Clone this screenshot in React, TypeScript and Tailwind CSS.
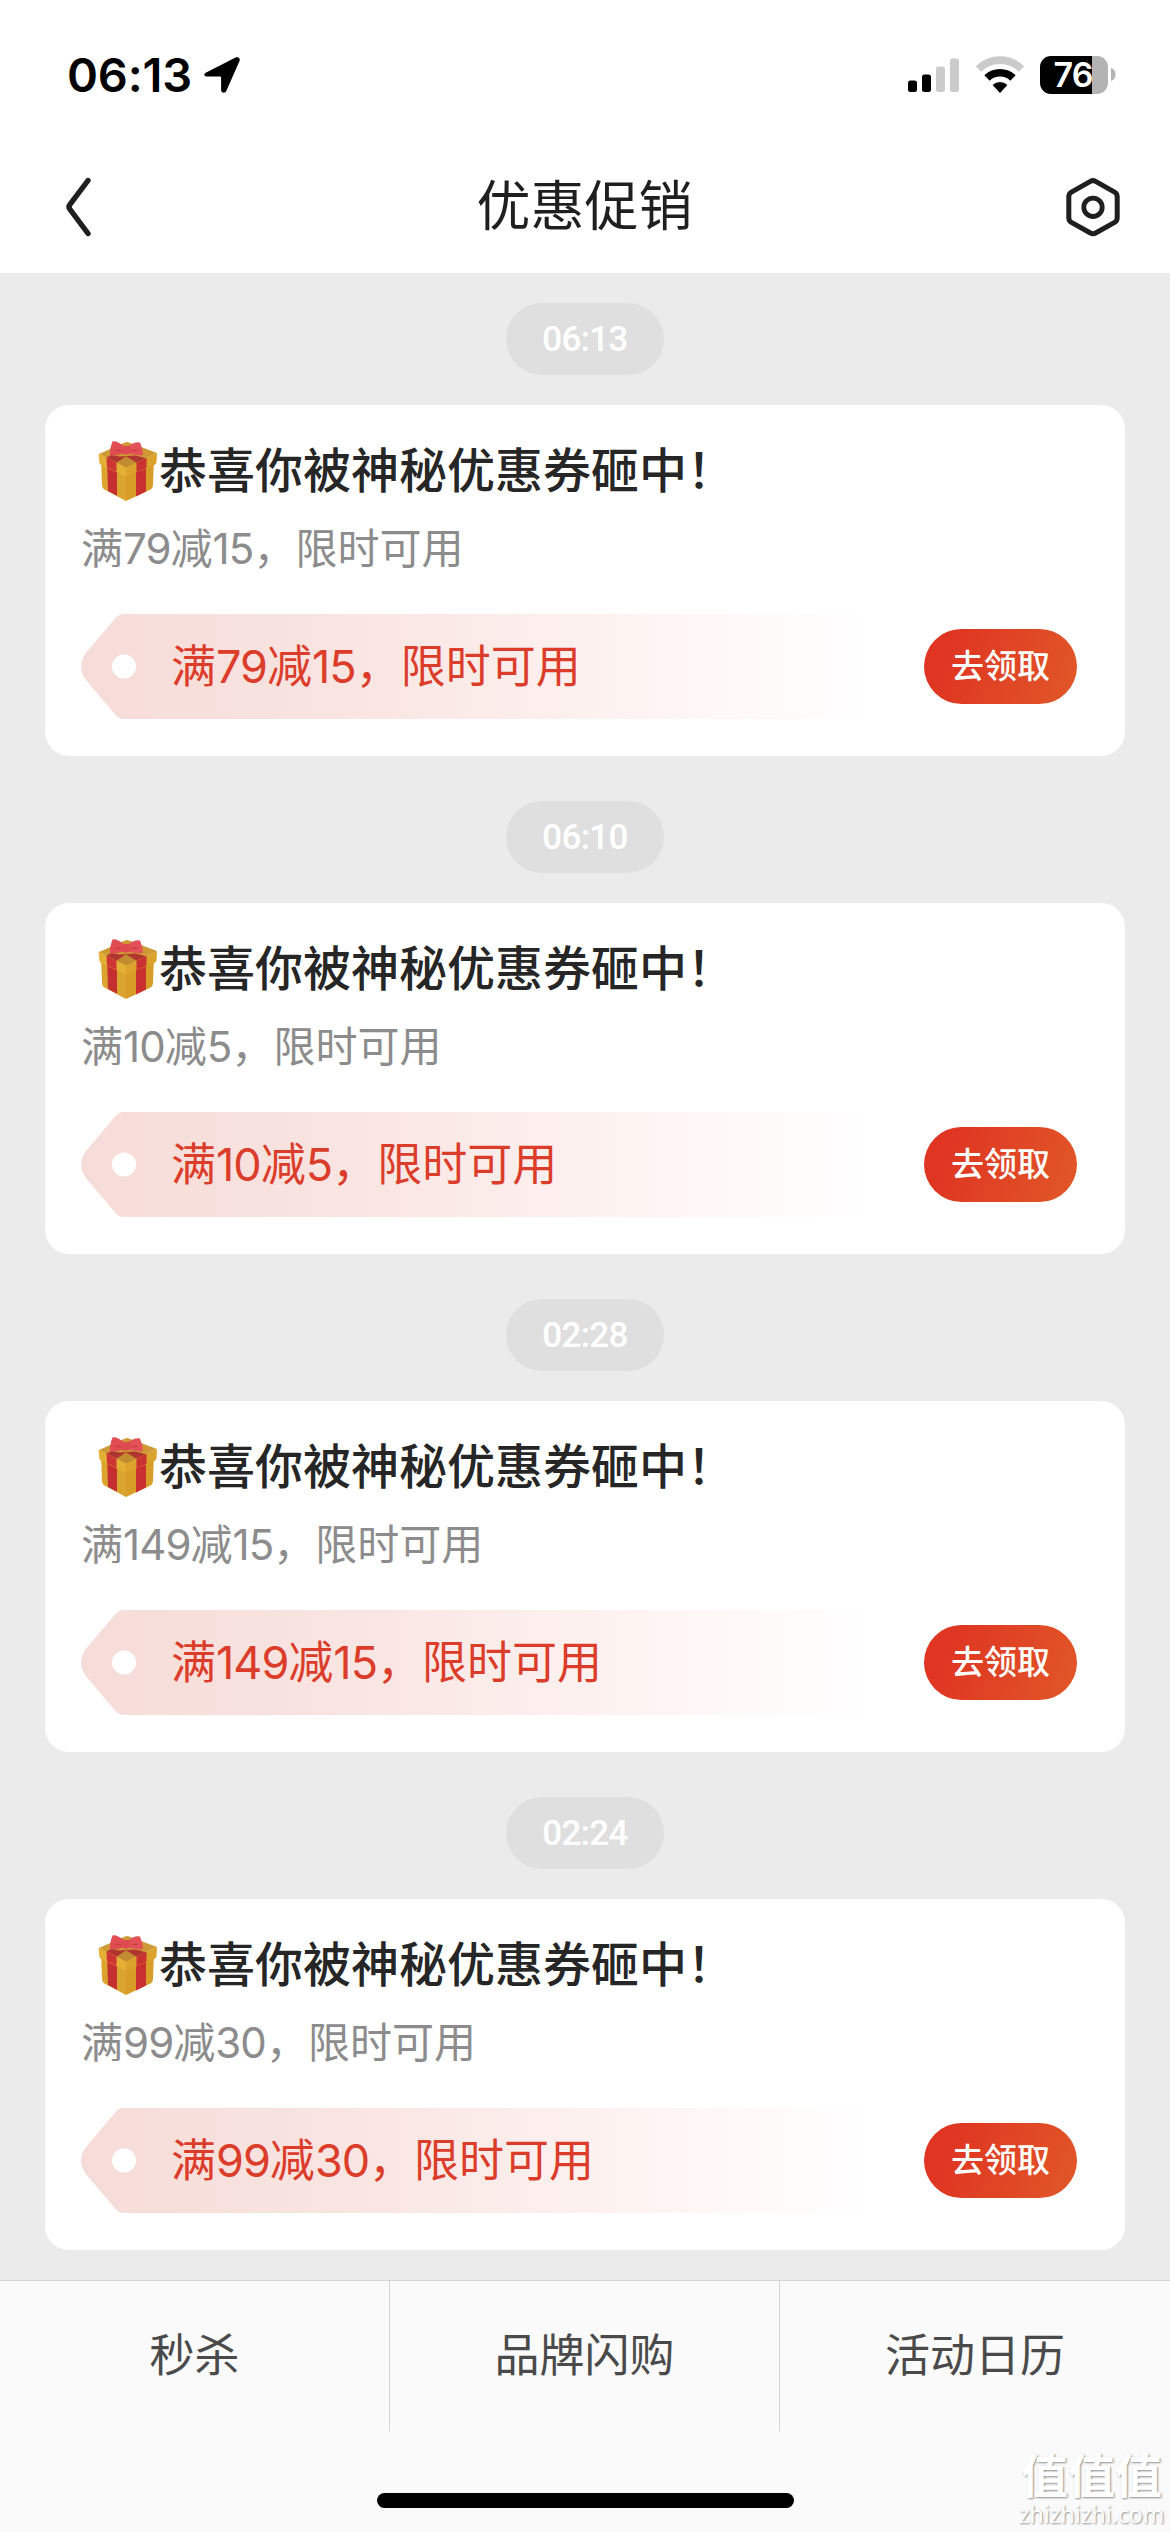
interface Coupon {
  time: string;
  offer: string;
}

const COUPONS: Coupon[] = [
  { time: "06:13", offer: "满79减15，限时可用" },
  { time: "06:10", offer: "满10减5，限时可用" },
  { time: "02:28", offer: "满149减15，限时可用" },
  { time: "02:24", offer: "满99减30，限时可用" },
];

const TABS = ["秒杀", "品牌闪购", "活动日历"];

function StatusBar() {
  return (
    <div className="flex h-[141px] items-center justify-between pt-[8px] pr-[54px] pl-[67px] text-black">
      <div className="flex items-center">
        <span className="w-[137px] text-[47px] leading-[60px] font-semibold tracking-[-0.2px]">06:13</span>
        <svg width="36" height="36" viewBox="0 0 36 36">
          <path
            d="M2.2 15.6 31.6.6c2.6-1.3 5 .6 3.9 3.5L22.3 34c-1.1 2.6-5.2 2-5.2-1V20.8c0-.9-.4-1.3-1.3-1.3H3.2c-3.2 0-4-2.5-1-3.9Z"
            fill="currentColor"
          />
        </svg>
      </div>
      <div className="flex items-center">
        <svg width="52" height="36" viewBox="0 0 52 36">
          <rect x="0" y="23.5" width="9" height="11.5" rx="2.5" />
          <rect x="14" y="17.5" width="9" height="17.5" rx="2.5" />
          <rect x="28" y="9.5" width="9" height="25.5" rx="2.5" fill="#cbcbcb" />
          <rect x="42" y="1.5" width="9" height="33.5" rx="2.5" fill="#cbcbcb" />
        </svg>
        <svg width="50" height="38" viewBox="0 0 50 38" className="ml-[15px]">
          <path d="M3.500 13a30.500 30.500 0 0 1 43 0" fill="none" stroke="#cbcbcb" strokeWidth="7.6" />
          <path d="M12 22a18.600 18.600 0 0 1 26 0" fill="none" stroke="#000" strokeWidth="7.6" />
          <path d="m25 37-7.400-8a10.500 10.500 0 0 1 14.800 0Z" />
        </svg>
        <div className="ml-[15px] flex h-[38px] w-[68px] items-center justify-center rounded-[11px] bg-[linear-gradient(90deg,#000_52px,#b3b3b3_52px)] text-[34px] leading-[38px] font-semibold text-white">
          <span className="-ml-[2px] tracking-[-0.8px]">76</span>
        </div>
        <svg width="5" height="13" viewBox="0 0 5 13" className="ml-[3px]">
          <path d="M0 0c6 2 6 11 0 13Z" fill="#b3b3b3" />
        </svg>
      </div>
    </div>
  );
}

function NavBar() {
  return (
    <div className="flex h-[132px] items-center justify-between pr-[50px] pl-[64px] text-[#1f1f1f]">
      <svg width="55" height="60" viewBox="0 0 55 60" fill="none" stroke="currentColor">
        <path
          d="M24 3.5 6 27.400c-1.400 1.800-1.400 3.200 0 5L24 56.500"
          strokeWidth="5.4"
          strokeLinecap="round"
          strokeLinejoin="round"
        />
      </svg>
      <h1 className="-mt-[1px] -ml-[15px] text-[54px] leading-[70px] font-normal">优惠促销</h1>
      <svg width="55" height="60" viewBox="0 0 55 60" fill="none" stroke="currentColor">
        <path
          d="M25.4 4.4q2.6-1.5 5.2 0l19 10.800q2.600 1.500 2.600 4.600v21q0 3-2.600 4.600l-19 10.600q-2.600 1.500-5.200 0l-19-10.600q-2.600-1.600-2.600-4.600v-21q0-3.100 2.600-4.600Z"
          strokeWidth="5"
        />
        <circle cx="28" cy="30.3" r="9.2" strokeWidth="4.8" />
      </svg>
    </div>
  );
}

function GiftIcon() {
  return (
    <svg width="62" height="62" viewBox="0 0 62 62">
      <path d="M4 18 29 30v31L7.5 49.5Q5 48 5 45Z" fill="#dba42f" />
      <path d="M29 30 57 17l-1 28q0 3-2.5 4.5L29 61Z" fill="#d89d27" />
      <path d="M10 19 20 24v31.8L11 51Z" fill="#c62f30" />
      <path d="m39 25 10-5v31.5l-10 5Z" fill="#c9302f" />
      <path d="M2 14 28 2.5Q30 1.5 32 2.5L60 13 29 28Z" fill="#cf9a35" />
      <path d="m9.5 17.5 5-2.500 8 1.500 15-1 5 1 7 2-10 5L29 18 19.5 23Z" fill="#b03430" />
      <path d="m19.5 22.8 9.500-6.500 10.500 6.500L29 28Z" fill="#c28c30" />
      <path d="M1.5 13.5 29 27.5v9L4 25Q2.5 24 2.3 22Z" fill="#e4af35" />
      <path d="M29 27.500 60 13l-.5 9q-.2 2-2 3L29 36.5Z" fill="#dca32c" />
      <path d="m9.5 17.5 10 5.200v9L10 27.500Z" fill="#cf3435" />
      <path d="m39.500 22.700 10-4.700v9.800l-10 4.500Z" fill="#ca3131" />
      <path d="M28 7Q20 .5 15.500 1.500 12.500 9 13 15.500q8 .5 15-3Z" fill="#e04d53" />
      <path d="M30 7Q38 1 43 2.500q3 6.500 3 12.500-9 1-16-3Z" fill="#e35258" />
      <path d="M17 10Q21 8.500 26 11 19 12 17 10Z" fill="#c93c43" />
      <path d="M42 10Q38 8.500 33 11q6 1 9-1Z" fill="#c93c43" />
      <rect x="24.5" y="6" width="9" height="8.5" rx="3.5" fill="#dd4b51" />
    </svg>
  );
}

// digits sit a little tighter than the surrounding characters
function OfferText({ offer }: { offer: string }) {
  return offer.split(/(\d+)/).map((part, i) => (
    <span key={i} className={/^\d/.test(part) ? "tracking-[-0.022em]" : ""}>
      {part}
    </span>
  ));
}

function CouponTag({ offer }: { offer: string }) {
  return (
    <div className="relative flex h-[105px] items-center justify-between">
      <svg width="797" height="105" viewBox="0 0 797 105" className="absolute top-0 left-0">
        <defs>
          <linearGradient id="tagFill" x1="0" x2="1" y1="0" y2="0">
            <stop offset="0" stopColor="#f6dcd8" />
            <stop offset="0.35" stopColor="#f9e5e2" />
            <stop offset="0.75" stopColor="#fef6f5" />
            <stop offset="1" stopColor="#ffffff" />
          </linearGradient>
        </defs>
        <path
          d="M797 0H43q-5 0-8.500 4L7 36.500Q0 44.500 0 52.500t7 16L34.500 101q3.500 4 8.500 4h754Z"
          fill="url(#tagFill)"
        />
        <circle cx="43" cy="52.5" r="12" fill="#fff" />
      </svg>
      <span className="relative pl-[90px] text-[45px] leading-[60px] text-[#dc3d2a]">
        <OfferText offer={offer} />
      </span>
      <button className="relative mr-[12px] h-[75px] w-[153px] rounded-full bg-[linear-gradient(110deg,#df3522_15%,#e15828)] text-[33px] leading-[75px] font-medium text-white">
        去领取
      </button>
    </div>
  );
}

function CouponMessage({ time, offer }: Coupon) {
  return (
    <div>
      <div className="flex justify-center">
        <span className="h-[72px] rounded-full bg-[#dfdfdf] px-[36px] font-[Roboto] text-[35px] leading-[73px] font-medium tracking-[-0.7px] text-white">
          {time}
        </span>
      </div>
      <div className="mt-[30px] h-[351px] rounded-[24px] bg-white px-[36px] pt-[33px]">
        <div className="flex items-center pl-[16px]">
          <GiftIcon />
          <h2 className="text-[48px] leading-[66px] font-medium text-[#262626]">恭喜你被神秘优惠券砸中！</h2>
        </div>
        <p className="mt-[18px] mb-[38px] text-[42px] leading-[54px] text-[#8c8c8c]">
          <OfferText offer={offer} />
        </p>
        <CouponTag offer={offer} />
      </div>
    </div>
  );
}

function TabBar() {
  return (
    <div className="h-[252px] border-t border-[#d4d4d4] bg-[#fafafa]">
      <div className="grid h-[150px] grid-cols-3 divide-x divide-[#d4d4d4]">
        {TABS.map((tab) => (
          <button key={tab} className="text-[45px] leading-[60px] text-[#4a4a4a]">
            {tab}
          </button>
        ))}
      </div>
      <div className="mx-auto mt-[62px] h-[15px] w-[417px] rounded-full bg-black" />
    </div>
  );
}

function Watermark() {
  return (
    <div className="absolute right-[7px] bottom-[5px] flex w-[143px] flex-col items-center text-white [text-shadow:1px_1px_2px_#8f8f8f]">
      <span className="text-[47px] leading-[50px] font-bold">值值值</span>
      <span className="font-['Noto_Sans'] text-[23px] leading-[26px]">zhizhizhi.com</span>
    </div>
  );
}

export default function App() {
  return (
    <div className="relative flex h-[2532px] w-[1170px] flex-col overflow-hidden bg-[#ebebeb] font-[Inter,'Noto_Sans_CJK_SC',sans-serif]">
      <header className="h-[273px] bg-white">
        <StatusBar />
        <NavBar />
      </header>
      <main className="flex flex-1 flex-col gap-[45px] px-[45px] pt-[30px]">
        {COUPONS.map((coupon) => (
          <CouponMessage key={coupon.time} {...coupon} />
        ))}
      </main>
      <TabBar />
      <Watermark />
    </div>
  );
}
